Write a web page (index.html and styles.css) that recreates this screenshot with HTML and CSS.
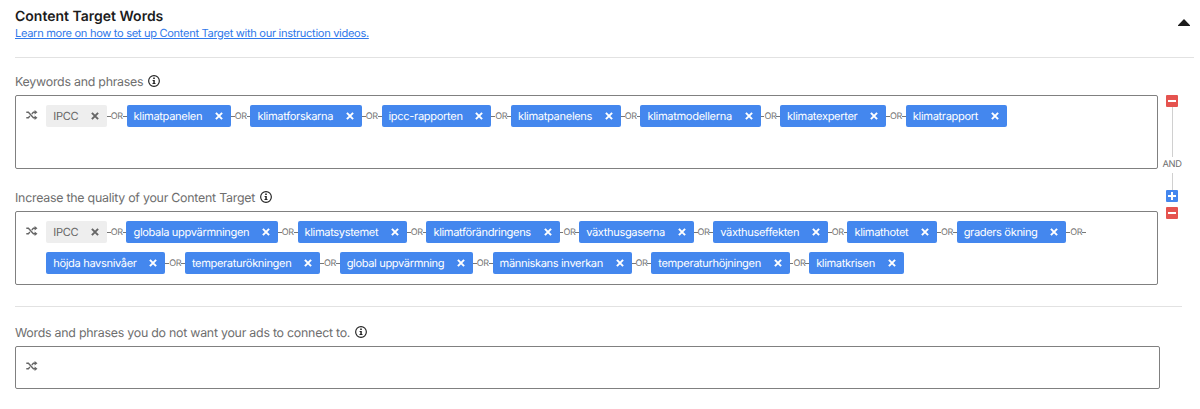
FILE: index.html
```html
<!DOCTYPE html>
<html lang="en">
<head>
  <meta charset="UTF-8">
  <title>Content Target Words</title>
  <meta name="viewport" content="width=device-width, initial-scale=1">
  <link rel="stylesheet" href="styles.css">
</head>
<body>
  <svg class="sprite" aria-hidden="true">
    <symbol id="info" viewBox="0 0 12 12">
      <circle cx="6" cy="6" r="5.35" fill="none" stroke="currentColor" stroke-width="1.15"/>
      <path fill="currentColor" d="M5.2 2.5h1.6v1.5H5.2zM4.6 4.9h2.2v3.2h.7v1H4.5v-1h.8V5.9h-.7z"/>
    </symbol>
    <symbol id="shuffle" viewBox="0 0 12 10">
      <path fill="none" stroke="currentColor" stroke-width="1.4" d="M.3 2.3h2.1l5 5.4h2.2M.3 7.7h2.1l1.5-1.6M5.8 4l1.6-1.7h2.2"/>
      <path fill="currentColor" d="M8.6 0l2.9 2.3-2.9 2.3zM8.6 5.4l2.9 2.3L8.6 10z"/>
    </symbol>
    <symbol id="close" viewBox="0 0 8 8">
      <path fill="none" stroke="currentColor" stroke-width="2" d="M.9.9l6.2 6.2M7.1.9L.9 7.1"/>
    </symbol>
  </svg>

  <header class="header">
    <div>
      <h1 class="title">Content Target Words</h1>
      <a class="help-link" href="#">Learn more on how to set up Content Target with our instruction videos.</a>
    </div>
    <svg class="collapse" viewBox="0 0 12 7"><path d="M6 0l6 6.2v.8H0v-.8z"/></svg>
  </header>

  <div class="targets">
    <div class="groups">
      <div class="label">Keywords and phrases <svg class="info"><use href="#info"/></svg></div>
      <div class="box">
        <svg class="shuffle"><use href="#shuffle"/></svg>
        <div class="tags">
          <span class="tag tag-grey">IPCC<svg class="close"><use href="#close"/></svg></span><span class="or">OR</span>
          <span class="tag">klimatpanelen<svg class="close"><use href="#close"/></svg></span><span class="or">OR</span>
          <span class="tag">klimatforskarna<svg class="close"><use href="#close"/></svg></span><span class="or">OR</span>
          <span class="tag">ipcc-rapporten<svg class="close"><use href="#close"/></svg></span><span class="or">OR</span>
          <span class="tag">klimatpanelens<svg class="close"><use href="#close"/></svg></span><span class="or">OR</span>
          <span class="tag">klimatmodellerna<svg class="close"><use href="#close"/></svg></span><span class="or">OR</span>
          <span class="tag">klimatexperter<svg class="close"><use href="#close"/></svg></span><span class="or">OR</span>
          <span class="tag">klimatrapport<svg class="close"><use href="#close"/></svg></span>
        </div>
      </div>

      <div class="label label-quality">Increase the quality of your Content Target <svg class="info"><use href="#info"/></svg></div>
      <div class="box">
        <svg class="shuffle"><use href="#shuffle"/></svg>
        <div class="tags tags-quality">
          <span class="tag tag-grey">IPCC<svg class="close"><use href="#close"/></svg></span><span class="or">OR</span>
          <span class="tag">globala uppvärmningen<svg class="close"><use href="#close"/></svg></span><span class="or">OR</span>
          <span class="tag">klimatsystemet<svg class="close"><use href="#close"/></svg></span><span class="or">OR</span>
          <span class="tag">klimatförändringens<svg class="close"><use href="#close"/></svg></span><span class="or">OR</span>
          <span class="tag">växthusgaserna<svg class="close"><use href="#close"/></svg></span><span class="or">OR</span>
          <span class="tag">växthuseffekten<svg class="close"><use href="#close"/></svg></span><span class="or">OR</span>
          <span class="tag">klimathotet<svg class="close"><use href="#close"/></svg></span><span class="or">OR</span>
          <span class="tag">graders ökning<svg class="close"><use href="#close"/></svg></span><span class="or">OR</span>
          <span class="tag">höjda havsnivåer<svg class="close"><use href="#close"/></svg></span><span class="or">OR</span>
          <span class="tag">temperaturökningen<svg class="close"><use href="#close"/></svg></span><span class="or">OR</span>
          <span class="tag">global uppvärmning<svg class="close"><use href="#close"/></svg></span><span class="or">OR</span>
          <span class="tag">människans inverkan<svg class="close"><use href="#close"/></svg></span><span class="or">OR</span>
          <span class="tag">temperaturhöjningen<svg class="close"><use href="#close"/></svg></span><span class="or">OR</span>
          <span class="tag">klimatkrisen<svg class="close"><use href="#close"/></svg></span>
        </div>
      </div>
    </div>

    <div class="rail">
      <svg class="btn btn-remove" viewBox="0 0 12 12"><path d="M2 6h8"/></svg>
      <div class="line line-long"></div>
      <div class="and">AND</div>
      <div class="line line-short"></div>
      <svg class="btn btn-add" viewBox="0 0 12 12"><path d="M2 6h8M6 2v8"/></svg>
      <svg class="btn btn-remove btn-second" viewBox="0 0 12 12"><path d="M2 6h8"/></svg>
    </div>
  </div>

  <div class="excluded">
    <div class="label">Words and phrases you do not want your ads to connect to. <svg class="info"><use href="#info"/></svg></div>
    <div class="box box-small">
      <svg class="shuffle"><use href="#shuffle"/></svg>
    </div>
  </div>
</body>
</html>
```
FILE: styles.css
```css
* {
  box-sizing: border-box;
}
body {
  margin: 0;
  padding: 0 6px 0 15px;
  background: #fff;
  color: #6e6e6e;
  font-family: Inter, 'Liberation Sans', sans-serif;
  text-rendering: geometricPrecision;
  overflow: hidden;
}
svg {
  display: block;
  flex: none;
}
.sprite {
  display: none;
}

.header {
  display: flex;
  justify-content: space-between;
  height: 58px;
  padding-top: 7px;
  border-bottom: 1px solid #e2e2e2;
}
.title {
  margin: 0;
  font-size: 14px;
  line-height: 19px;
  font-weight: 600;
  color: #1c1c1c;
}
.help-link {
  display: block;
  font-size: 11.1px;
  letter-spacing: -0.32px;
  line-height: 15px;
  color: #2f78ea;
}
.collapse {
  width: 12px;
  height: 7px;
  margin: 12px 4px 0 0;
  fill: #1c1c1c;
}

.targets {
  display: flex;
}
.groups {
  width: 1143px;
}
.label {
  display: flex;
  align-items: center;
  gap: 5px;
  height: 37px;
  padding-top: 10px;
  font-size: 12.4px;
  letter-spacing: -0.25px;
}
.label-quality {
  height: 42px;
  padding-top: 15px;
}
.info {
  width: 12px;
  height: 12px;
  margin-bottom: 1px;
  color: #222;
}
.box {
  display: flex;
  height: 74px;
  padding: 9px 0 0 10px;
  border: 1px solid #808080;
  border-radius: 2px;
}
.shuffle {
  width: 12px;
  height: 10px;
  margin: 5px 8.3px 0 0;
  color: #666;
}

/* the chips carry their own text padding, the OR joins sit flush between them */
.tags {
  display: flex;
  flex-wrap: wrap;
  align-content: flex-start;
  max-width: 1060px;
  row-gap: 9px;
  letter-spacing: -0.33px;
}
.tags-quality {
  letter-spacing: -0.36px;
}
.tag {
  display: flex;
  align-items: center;
  justify-content: space-between;
  height: 22px;
  padding: 0 8px 0 7px;
  gap: 12.8px;
  border-radius: 2px;
  background: #4487ee;
  color: #fff;
  font-size: 11.1px;
  white-space: nowrap;
}
.tag-grey {
  background: #eee;
  color: #666;
}
.close {
  width: 8px;
  height: 8px;
}
.or {
  display: flex;
  align-items: center;
  justify-content: center;
  width: 19.5px;
  height: 22px;
  font-size: 9px;
  letter-spacing: -0.4px;
  color: #777;
}
.or::before,
.or::after {
  content: "";
  flex: 1;
  height: 1px;
  background: #777;
}

.rail {
  display: flex;
  flex-direction: column;
  align-items: center;
  width: 28px;
  padding-top: 37px;
}
.btn {
  width: 12px;
  height: 12px;
  border-radius: 1px;
  fill: none;
  stroke: #fff;
  stroke-width: 2;
}
.btn-remove {
  background: #e5534f;
}
.btn-add {
  background: #4487ee;
}
.btn-second {
  margin-top: 5px;
}
.line {
  width: 1px;
  background: #d0d0d0;
}
.line-long {
  height: 50px;
}
.line-short {
  height: 17px;
}
.and {
  height: 16px;
  font-size: 9.3px;
  letter-spacing: -0.4px;
  line-height: 15px;
}

.excluded {
  width: 1167px;
  margin-top: 21px;
  border-top: 1px solid #e2e2e2;
}
.excluded .label {
  height: 39px;
  padding-top: 12px;
}
.box-small {
  width: 1145px;
  height: 43px;
}
```
